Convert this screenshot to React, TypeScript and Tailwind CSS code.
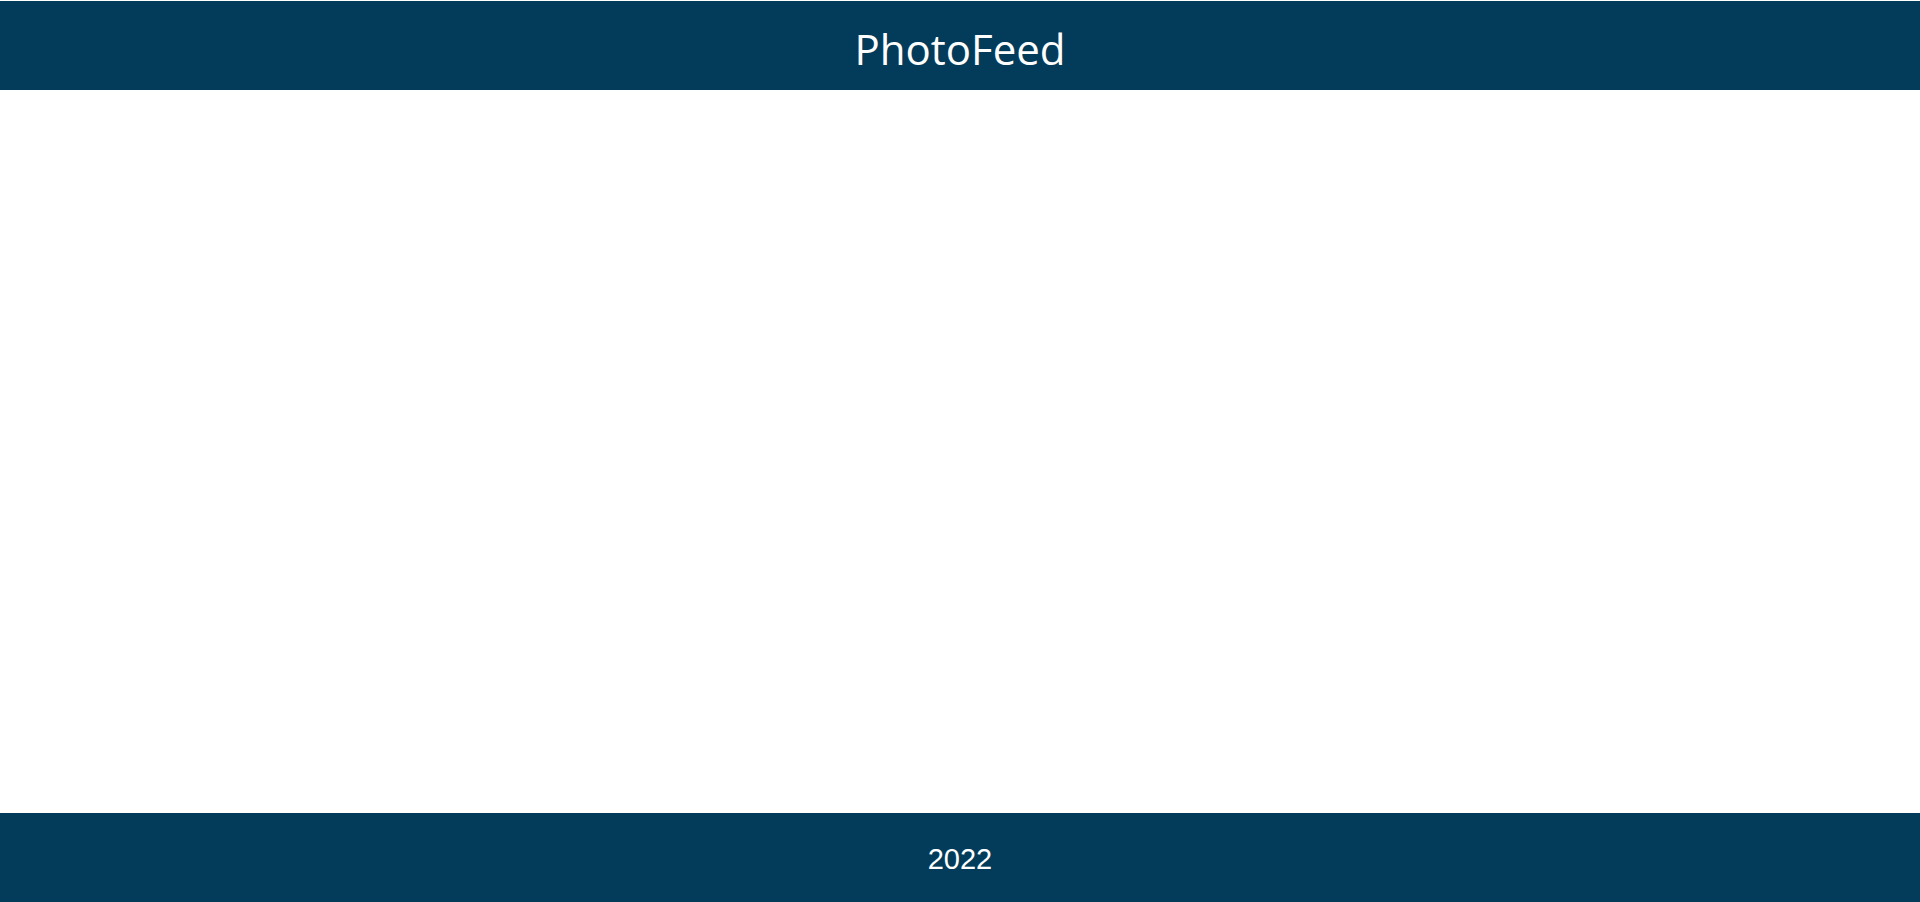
export default function App() {
  return (
    <div className="flex min-h-[902px] flex-col bg-white">
      <header className="mt-px flex h-[89px] items-center justify-center bg-[#033b5a] pt-[6px]">
        <h1 className="text-[42px] font-normal text-white" style={{ fontFamily: '"Open Sans", sans-serif' }}>
          PhotoFeed
        </h1>
      </header>
      <main className="flex-1" />
      <footer className="flex h-[89px] items-center justify-center bg-[#033b5a] pt-[4px]">
        <span className="text-[29px] text-white" style={{ fontFamily: '"Liberation Sans", Arial, sans-serif' }}>
          2022
        </span>
      </footer>
    </div>
  );
}
